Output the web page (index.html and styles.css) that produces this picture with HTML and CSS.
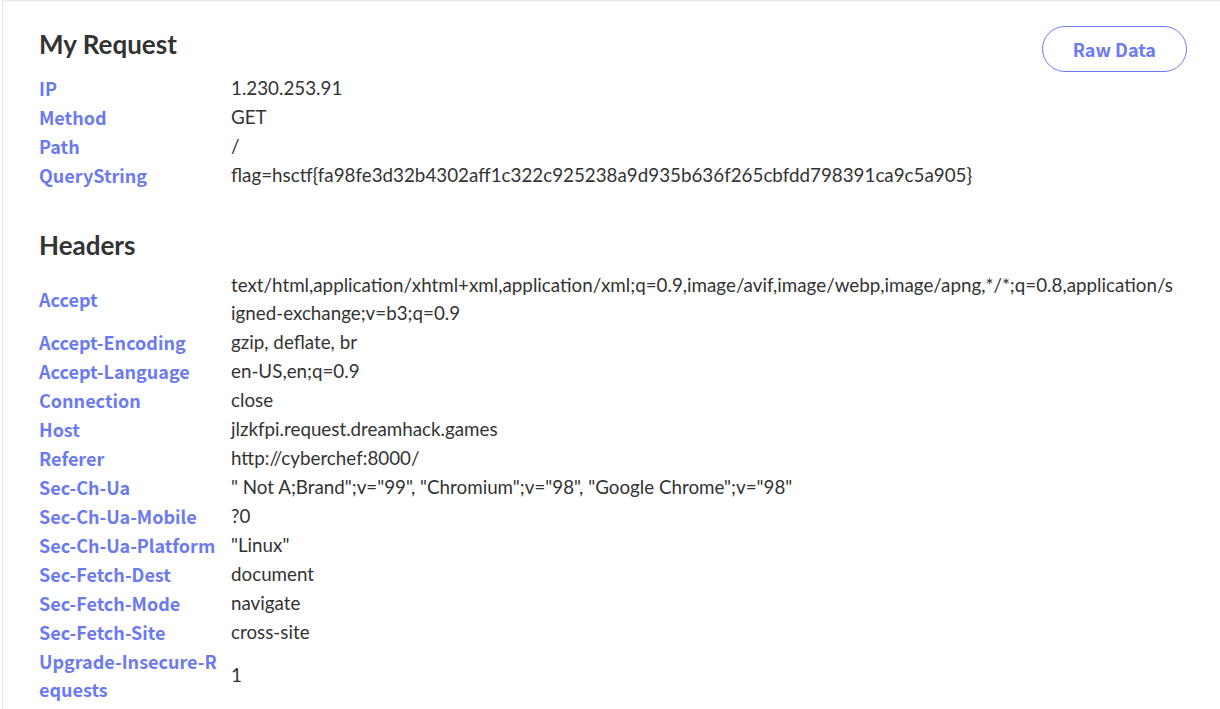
FILE: index.html
```html
<!DOCTYPE html>
<html lang="en">
<head>
    <meta charset="UTF-8">
    <meta name="viewport" content="width=device-width, initial-scale=1.0">
    <title>My Request</title>
    <link rel="stylesheet" href="styles.css">
</head>
<body>
    <div class="card">
        <div class="section-head">
            <h2>My Request</h2>
            <a class="raw-btn" href="#">Raw Data</a>
        </div>
        <div class="kv">
            <div class="key">IP</div><div class="val">1.230.253.91</div>
            <div class="key">Method</div><div class="val">GET</div>
            <div class="key">Path</div><div class="val">/</div>
            <div class="key">QueryString</div><div class="val">flag=hsctf{fa98fe3d32b4302aff1c322c925238a9d935b636f265cbfdd798391ca9c5a905}</div>
        </div>

        <h2 class="headers-title">Headers</h2>
        <div class="kv">
            <div class="key">Accept</div><div class="val">text/html,application/xhtml+xml,application/xml;q=0.9,image/avif,image/webp,image/apng,*/*;q=0.8,application/signed-exchange;v=b3;q=0.9</div>
            <div class="key">Accept-Encoding</div><div class="val">gzip, deflate, br</div>
            <div class="key">Accept-Language</div><div class="val">en-US,en;q=0.9</div>
            <div class="key">Connection</div><div class="val">close</div>
            <div class="key">Host</div><div class="val">jlzkfpi.request.dreamhack.games</div>
            <div class="key">Referer</div><div class="val">http://cyberchef:8000/</div>
            <div class="key">Sec-Ch-Ua</div><div class="val">" Not A;Brand";v="99", "Chromium";v="98", "Google Chrome";v="98"</div>
            <div class="key">Sec-Ch-Ua-Mobile</div><div class="val">?0</div>
            <div class="key">Sec-Ch-Ua-Platform</div><div class="val">"Linux"</div>
            <div class="key">Sec-Fetch-Dest</div><div class="val">document</div>
            <div class="key">Sec-Fetch-Mode</div><div class="val">navigate</div>
            <div class="key">Sec-Fetch-Site</div><div class="val">cross-site</div>
            <div class="key">Upgrade-Insecure-Requests</div><div class="val">1</div>
            <div class="key">User-Agent</div><div class="val">Mozilla/5.0 (X11; Linux x86_64) AppleWebKit/537.36 (KHTML, like Gecko) Chrome/98.0.4758.102 Safari/537.36</div>
        </div>
    </div>
</body>
</html>
```

FILE: styles.css
```css
body { margin: 0; padding: 0; background-color: #fff; color: #333; font-family: 'Lato', 'Noto Sans CJK KR', sans-serif; }
.card { margin-left: 2px; padding: 25px 33px 40px 36px; border-top: 1px solid #e8e8ee; border-left: 1px solid #e2e2ea; }
.section-head { display: flex; justify-content: space-between; align-items: flex-start; }
h2 { margin: 0; font-size: 26px; line-height: 36px; font-weight: 700; color: #333; }
.headers-title { margin-top: 38px; margin-bottom: 8px; }
.raw-btn { display: inline-block; margin-bottom: -10px; padding: 0 30px; height: 46px; line-height: 44px; box-sizing: border-box; border: 1px solid #6b7af0; border-radius: 23px; color: #6b7af0; font-family: 'Noto Sans CJK KR', sans-serif; font-weight: 700; font-size: 18px; text-decoration: none; }
.section-head + .kv { margin-top: 12px; }
.kv { display: grid; grid-template-columns: 192px 1fr; row-gap: 1px; font-size: 18.8px; line-height: 28px; align-items: center; }
.key { padding-right: 10px; color: #6b7af0; font-family: 'Noto Sans CJK KR', sans-serif; font-size: 18px; font-weight: 700; word-break: break-all; }
.val { padding-right: 12px; color: #333; word-break: break-all; }
```
